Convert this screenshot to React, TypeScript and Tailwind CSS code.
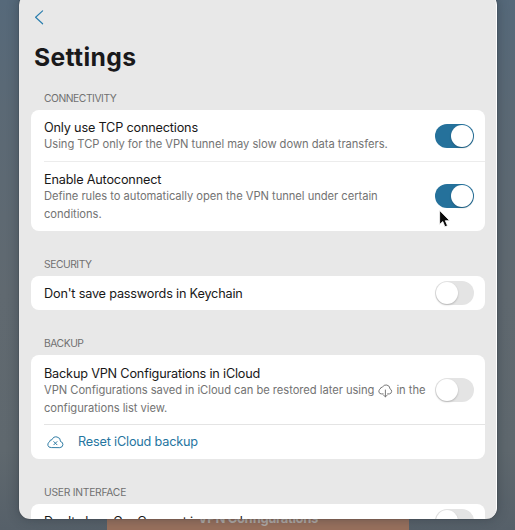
import type { ReactNode } from "react";

function Toggle({ on = false }: { on?: boolean }) {
  return (
    <span
      className={
        "flex h-6 w-[39px] shrink-0 items-center rounded-full " +
        (on ? "justify-end bg-[#25719b] pr-px" : "justify-start bg-[#e4e4e4] pl-px")
      }
    >
      <span className="size-[22px] rounded-full bg-white shadow-[0_1px_2px_rgba(0,0,0,0.22)]" />
    </span>
  );
}

function SectionLabel({ children, className }: { children: ReactNode; className: string }) {
  return (
    <h2 className={"ml-[25px] h-[14px] shrink-0 whitespace-nowrap text-[10.3px] leading-[14px] text-[#707070] " + className}>
      {children}
    </h2>
  );
}

function Card({ children, className = "" }: { children: ReactNode; className?: string }) {
  return (
    <section className={"ml-3 w-[454px] shrink-0 overflow-hidden rounded-[8px] bg-white " + className}>
      {children}
    </section>
  );
}

function Title({ children }: { children: ReactNode }) {
  return (
    <p className="h-[17px] whitespace-nowrap text-[12.7px] leading-[17px] tracking-[-0.19px] text-[#181818]">
      {children}
    </p>
  );
}

function Detail({ children }: { children: ReactNode }) {
  return (
    <p className="h-[17px] whitespace-nowrap text-[11.2px] leading-[17px] tracking-[-0.04px] text-[#737373]">
      {children}
    </p>
  );
}

function CloudDownload() {
  return (
    <svg
      className="ml-1 mr-[3px] inline-block h-[14px] w-[15px] align-[-4px]"
      viewBox="0 0 15 14"
      fill="none"
      stroke="currentColor"
      strokeWidth="0.95"
      strokeLinecap="round"
      strokeLinejoin="round"
    >
      <path d="M5.2 9.9H3.5A2.6 2.6 0 0 1 2.2 5 2.1 2.1 0 0 1 4.4 3.2 4 4 0 0 1 12 4.9 2.6 2.6 0 0 1 11.4 9.9H9.6M7.4 6V12.9M5.5 11 7.4 12.9 9.3 11" />
    </svg>
  );
}

function CloudX() {
  return (
    <svg
      className="h-[13px] w-[17px] shrink-0"
      viewBox="0 0 17 13"
      fill="none"
      stroke="currentColor"
      strokeWidth="0.95"
      strokeLinecap="round"
      strokeLinejoin="round"
    >
      <path d="M4 11.6A3 3 0 0 1 2.5 5.9 2.5 2.5 0 0 1 5 3.7 4.4 4.4 0 0 1 13.5 5.5 3.1 3.1 0 0 1 13.2 11.6Z" />
      <path d="M6.8 5.6 10 8.8M10 5.6 6.8 8.8" />
    </svg>
  );
}

export default function App() {
  return (
    <div className="relative h-[530px] w-[515px] overflow-hidden bg-[linear-gradient(180deg,#56697a_0%,#5b6975_20%,#606970_55%,#5f686e_85%,#566069_100%)] font-[Inter,sans-serif]">
      <div className="absolute left-[107px] top-[510px] h-5 w-[302px] bg-[#98705d]">
        <p className="ml-[91px] whitespace-nowrap text-[13px] font-bold leading-[17px] tracking-[-0.35px] text-[#b0aaa6]">
          VPN Configurations
        </p>
      </div>
      <main className="relative -mt-[6px] ml-[19px] flex h-[525px] w-[478px] flex-col overflow-hidden rounded-[11px] border-r border-white bg-[#e8e8e8] shadow-[0_0_12px_rgba(30,40,50,0.4),0_0_1px_rgba(20,20,20,0.8)]">
        <svg
          className="ml-[15px] mt-4 h-[15px] w-[10px] shrink-0"
          viewBox="0 0 10 15"
          fill="none"
          stroke="#2c7fae"
          strokeWidth="1.2"
          strokeLinecap="round"
          strokeLinejoin="round"
        >
          <path d="M8.6 .9 1.6 7.3 8.6 13.8" />
        </svg>
        <h1 className="ml-[15px] mt-[17px] h-[30px] shrink-0 whitespace-nowrap text-[24.7px] font-bold leading-[30px] tracking-[0.35px] text-[#19191b]">
          Settings
        </h1>
        <SectionLabel className="mt-[19px] tracking-[-0.45px]">CONNECTIVITY</SectionLabel>
        <Card className="mt-[5px] h-[121px]">
          <div className="flex h-[51px] items-center justify-between pr-[11px]">
            <div className="h-full pl-[13px] pt-[9px]">
              <Title>Only use TCP connections</Title>
              <Detail>Using TCP only for the VPN tunnel may slow down data transfers.</Detail>
            </div>
            <Toggle on />
          </div>
          <div className="ml-[13px] flex h-[70px] justify-between border-t border-[#ececec] pr-[11px]">
            <div className="pt-[9px]">
              <Title>Enable Autoconnect</Title>
              <Detail>Define rules to automatically open the VPN tunnel under certain</Detail>
              <div className="pt-px">
                <Detail>conditions.</Detail>
              </div>
            </div>
            <div className="pt-[22px]">
              <Toggle on />
            </div>
          </div>
        </Card>
        <SectionLabel className="mt-[26px] tracking-[-0.45px]">SECURITY</SectionLabel>
        <Card className="mt-[5px] flex h-[34px] items-center justify-between pl-[13px] pr-[11px]">
          <Title>Don't save passwords in Keychain</Title>
          <Toggle />
        </Card>
        <SectionLabel className="mt-[26px] tracking-[-0.45px]">BACKUP</SectionLabel>
        <Card className="mt-[5px] h-[104px]">
          <div className="flex h-[69px] items-center justify-between pr-[11px]">
            <div className="h-full pl-[13px] pt-[10px]">
              <Title>Backup VPN Configurations in iCloud</Title>
              <Detail>
                VPN Configurations saved in iCloud can be restored later using
                <CloudDownload />
                in the
              </Detail>
              <div className="pt-px">
                <Detail>configurations list view.</Detail>
              </div>
            </div>
            <Toggle />
          </div>
          <div className="ml-[13px] flex h-[35px] items-center border-t border-[#e4e4e4] pl-[3px] text-[#25759f]">
            <CloudX />
            <span className="-mt-px ml-[14px] whitespace-nowrap text-[12.7px] leading-[17px] tracking-[-0.19px]">
              Reset iCloud backup
            </span>
          </div>
        </Card>
        <SectionLabel className="mt-[26px] tracking-[-0.25px]">USER INTERFACE</SectionLabel>
        <Card className="mt-[5px] flex h-[34px] items-center justify-between pl-[13px] pr-[11px]">
          <Title>Don't show GooConnect in menu bar</Title>
          <Toggle />
        </Card>
      </main>
      <svg className="absolute left-[437px] top-[208px] h-[21px] w-[15px]" viewBox="0 0 15 21">
        <path
          d="M2.6 2.4v14l3.2-2.9 2.1 5.3 2.6-1.1-2.2-5h4.4Z"
          fill="#0a0a0a"
          stroke="#fff"
          strokeWidth="0.8"
          strokeLinejoin="round"
        />
      </svg>
    </div>
  );
}
